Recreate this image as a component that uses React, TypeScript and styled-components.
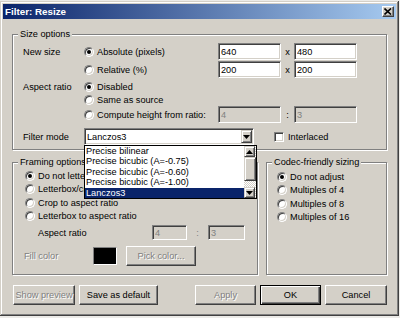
import React from 'react'
import styled, { createGlobalStyle, css } from 'styled-components'

const face = '#d4d0c8'
const shadow = '#808080'
const dark = '#404040'

const GlobalStyle = createGlobalStyle`
  html, body { margin: 0; padding: 0; }
  body {
    background: #ecebe8;
    font-family: "Liberation Sans", Arial, sans-serif;
    font-size: 9.2px;
    color: #000;
    overflow: hidden;
  }
`

const Window = styled.div`
  width: 399px;
  height: 315px;
  margin-top: 1px;
  box-sizing: border-box;
  padding: 3px;
  background: ${face};
  box-shadow: inset -1px -1px ${dark}, inset 1px 1px ${face}, inset -2px -2px ${shadow}, inset 2px 2px #fff;
  display: flex;
  flex-direction: column;
`

const TitleBar = styled.div`
  height: 15px;
  display: flex;
  align-items: center;
  justify-content: space-between;
  padding: 0 2px;
  background: linear-gradient(to right, #0a246a, #a6caf0);
  color: #fff;
  font-weight: bold;
  font-size: 9.8px;
`

const CloseButton = styled.span`
  width: 12px;
  height: 11px;
  box-sizing: border-box;
  background: ${face};
  border: 1px solid;
  border-color: #fff ${dark} ${dark} #fff;
  box-shadow: inset -1px -1px ${shadow};
  display: flex;
  align-items: center;
  justify-content: center;
`

const Content = styled.div`
  padding: 9px 9px 0 9px;
  display: flex;
  flex-direction: column;
`

const Group = styled.fieldset<{ $width?: number }>`
  margin: 0;
  padding: 0;
  min-width: 0;
  box-sizing: border-box;
  border: 1px solid ${shadow};
  box-shadow: inset 1px 1px #fff, 1px 1px #fff;
  ${p => p.$width ? `width: ${p.$width}px;` : 'flex: 1;'}
`

const Legend = styled.legend`
  margin-left: 5px;
  padding: 0 2px;
  height: 12px;
  line-height: 12px;
  background: ${face};
`

const GroupBody = styled.div<{ $pad: string }>`
  padding: ${p => p.$pad};
`

const SizeGrid = styled.div`
  display: grid;
  grid-template-columns: 61px 134px 63px 13px 63px;
  grid-template-rows: 18px 18px 15px 12px 17px 22px;
`

const Cell = styled.div<{ $bottom?: boolean }>`
  display: flex;
  align-items: center;
  white-space: nowrap;
  ${p => p.$bottom && css`
    align-self: end;
    height: 17px;
  `}
`

const Sep = styled.div`
  display: flex;
  align-items: center;
  justify-content: center;
  height: 17px;
`

const Option = styled.label<{ $span?: boolean }>`
  display: flex;
  align-items: center;
  gap: 3px;
  white-space: nowrap;
  ${p => p.$span && 'grid-column: 2 / 6;'}
`

const Dot = styled.span<{ $checked?: boolean }>`
  width: 10px;
  height: 10px;
  flex: none;
  box-sizing: border-box;
  border-radius: 50%;
  background: #fff;
  border: 1px solid;
  border-color: ${shadow} #fff #fff ${shadow};
  box-shadow: inset 1px 1px ${dark}, inset -1px -1px ${face};
  &::after {
    content: '';
    display: ${p => (p.$checked ? 'block' : 'none')};
    width: 4px;
    height: 4px;
    margin: 2px;
    border-radius: 50%;
    background: #000;
  }
`

const Field = styled.input<{ $w?: number; $h?: number }>`
  width: ${p => p.$w ?? 63}px;
  height: ${p => p.$h ?? 17}px;
  box-sizing: border-box;
  margin: 0;
  padding: 0 2px;
  font: inherit;
  color: #000;
  background: #fff;
  border: 1px solid;
  border-color: ${shadow} #fff #fff ${shadow};
  box-shadow: inset 1px 1px ${dark}, inset -1px -1px ${face};
  outline: none;
  &:disabled {
    background: ${face};
    color: ${shadow};
  }
`

const FilterRow = styled.div`
  grid-column: 2 / 6;
  align-self: end;
  height: 17px;
  display: flex;
  align-items: center;
`

const Combo = styled.div`
  position: relative;
  width: 170px;
  height: 17px;
  box-sizing: border-box;
  padding: 1px;
  background: #fff;
  border: 1px solid;
  border-color: ${shadow} #fff #fff ${shadow};
  box-shadow: inset 1px 1px ${dark}, inset -1px -1px ${face};
  display: flex;
  align-items: stretch;
`

const ComboText = styled.span`
  flex: 1;
  padding-left: 1px;
  display: flex;
  align-items: center;
`

const ArrowButton = styled.span<{ $h?: number }>`
  width: 11px;
  ${p => p.$h && `height: ${p.$h}px;`}
  flex: none;
  box-sizing: border-box;
  background: ${face};
  border: 1px solid;
  border-color: ${face} ${dark} ${dark} ${face};
  box-shadow: inset 1px 1px #fff, inset -1px -1px ${shadow};
  display: flex;
  align-items: center;
  justify-content: center;
`

const DropList = styled.div`
  position: absolute;
  top: calc(100% + 1px);
  left: -1px;
  width: 173px;
  height: 54px;
  box-sizing: border-box;
  border: 1px solid #000;
  background: #fff;
  display: flex;
  z-index: 5;
`

const Items = styled.div`
  flex: 1;
`

const Item = styled.div<{ $selected?: boolean }>`
  height: 10.4px;
  line-height: 10.4px;
  padding-left: 1px;
  white-space: nowrap;
  ${p => p.$selected && css`
    background: #0a246a;
    color: #fff;
  `}
`

const ScrollBar = styled.div`
  width: 12px;
  display: flex;
  flex-direction: column;
  background: repeating-conic-gradient(#fff 0 25%, ${face} 0 50%) 0 0 / 2px 2px;
`

const Thumb = styled.span`
  height: 24px;
  box-sizing: border-box;
  background: ${face};
  border: 1px solid;
  border-color: ${face} ${dark} ${dark} ${face};
  box-shadow: inset 1px 1px #fff, inset -1px -1px ${shadow};
`

const Track = styled.span`
  flex: 1;
`

const CheckBox = styled.span`
  width: 10px;
  height: 10px;
  flex: none;
  box-sizing: border-box;
  background: #fff;
  border: 1px solid;
  border-color: ${shadow} #fff #fff ${shadow};
  box-shadow: inset 1px 1px ${dark}, inset -1px -1px ${face};
`

const CheckLabel = styled.label`
  margin-left: 20px;
  display: flex;
  align-items: center;
  gap: 4px;
`

const LowerRow = styled.div`
  margin-top: 6px;
  display: flex;
  gap: 8px;
`

const OptionRow = styled.div`
  height: 13.5px;
  display: flex;
  align-items: center;
`

const FlexRow = styled.div<{ $h: number; $top: number }>`
  height: ${p => p.$h}px;
  margin-top: ${p => p.$top}px;
  display: flex;
  align-items: center;
`

const SubLabel = styled.span<{ $w: number; $indent: number; $disabled?: boolean }>`
  width: ${p => p.$w}px;
  margin-left: ${p => p.$indent}px;
  flex: none;
  white-space: nowrap;
  ${p => p.$disabled && css`
    color: ${shadow};
    text-shadow: 1px 1px #fff;
  `}
`

const RatioSep = styled.span`
  width: 21px;
  text-align: center;
  color: ${shadow};
`

const Swatch = styled.span`
  width: 24px;
  height: 18px;
  box-sizing: border-box;
  background: #000;
  border: 1px solid;
  border-color: ${shadow} #fff #fff ${shadow};
`

const Button = styled.button<{ $w: number; $default?: boolean; $left?: number }>`
  width: ${p => p.$w}px;
  height: 20px;
  box-sizing: border-box;
  margin: 0;
  margin-left: ${p => p.$left ?? 0}px;
  padding: 0;
  font: inherit;
  color: #000;
  background: ${face};
  border: 1px solid;
  border-color: #fff ${dark} ${dark} #fff;
  box-shadow: inset -1px -1px ${shadow};
  &:disabled {
    color: ${shadow};
    text-shadow: 1px 1px #fff;
  }
  ${p => p.$default && css`
    border-color: #000;
    box-shadow: inset 1px 1px #fff, inset -1px -1px ${dark}, inset -2px -2px ${shadow};
  `}
`

const ButtonBar = styled.div`
  margin-top: 10px;
  padding-left: 1px;
  display: flex;
  gap: 4px;
`

const Spacer = styled.span`
  flex: 1;
`

const Arrow: React.FC<{ up?: boolean }> = ({ up }) => (
  <svg width="7" height="4" viewBox="0 0 7 4">
    <path d={up ? 'M3.5 0 L7 4 L0 4 Z' : 'M0 0 L7 0 L3.5 4 Z'} fill="#000" />
  </svg>
)

const Radio: React.FC<{ checked?: boolean; span?: boolean; children: React.ReactNode }> = ({ checked, span, children }) => (
  <Option $span={span}>
    <Dot $checked={checked} />
    {children}
  </Option>
)

const filters = [
  'Precise bilinear',
  'Precise bicubic (A=-0.75)',
  'Precise bicubic (A=-0.60)',
  'Precise bicubic (A=-1.00)',
  'Lanczos3',
]

const App: React.FC = () => {
  return (
    <>
      <GlobalStyle />
      <Window>
        <TitleBar>
          <span>Filter: Resize</span>
          <CloseButton>
            <svg width="8" height="7" viewBox="0 0 8 7">
              <path d="M0.5 0.5 L7 6.5 M7 0.5 L0.5 6.5" stroke="#000" strokeWidth="1.6" />
            </svg>
          </CloseButton>
        </TitleBar>
        <Content>
          <Group>
            <Legend>Size options</Legend>
            <GroupBody $pad="3px 9px 4px 10px">
              <SizeGrid>
                <Cell>New size</Cell>
                <Radio checked>Absolute (pixels)</Radio>
                <Field readOnly value="640" />
                <Sep>x</Sep>
                <Field readOnly value="480" />

                <Cell />
                <Radio>Relative (%)</Radio>
                <Field readOnly value="200" />
                <Sep>x</Sep>
                <Field readOnly value="200" />

                <Cell>Aspect ratio</Cell>
                <Radio checked span>Disabled</Radio>

                <Cell />
                <Radio span>Same as source</Radio>

                <Cell />
                <Radio>Compute height from ratio:</Radio>
                <Field disabled value="4" />
                <Sep>:</Sep>
                <Field disabled value="3" />

                <Cell $bottom>Filter mode</Cell>
                <FilterRow>
                  <Combo>
                    <ComboText>Lanczos3</ComboText>
                    <ArrowButton>
                      <Arrow />
                    </ArrowButton>
                    <DropList>
                      <Items>
                        {filters.map(f => (
                          <Item key={f} $selected={f === 'Lanczos3'}>{f}</Item>
                        ))}
                      </Items>
                      <ScrollBar>
                        <ArrowButton $h={11}>
                          <Arrow up />
                        </ArrowButton>
                        <Thumb />
                        <Track />
                        <ArrowButton $h={11}>
                          <Arrow />
                        </ArrowButton>
                      </ScrollBar>
                    </DropList>
                  </Combo>
                  <CheckLabel>
                    <CheckBox />
                    Interlaced
                  </CheckLabel>
                </FilterRow>
              </SizeGrid>
            </GroupBody>
          </Group>

          <LowerRow>
            <Group $width={246}>
              <Legend>Framing options</Legend>
              <GroupBody $pad="1px 8px 8px 12px">
                <OptionRow><Radio checked>Do not letterbox or crop</Radio></OptionRow>
                <OptionRow><Radio>Letterbox/crop to size</Radio></OptionRow>
                <OptionRow><Radio>Crop to aspect ratio</Radio></OptionRow>
                <OptionRow><Radio>Letterbox to aspect ratio</Radio></OptionRow>
                <FlexRow $h={15} $top={2}>
                  <SubLabel $w={114} $indent={13}>Aspect ratio</SubLabel>
                  <Field disabled value="4" $w={35} $h={15} />
                  <RatioSep>:</RatioSep>
                  <Field disabled value="3" $w={37} $h={15} />
                </FlexRow>
                <FlexRow $h={20} $top={6}>
                  <SubLabel $w={69} $indent={-1} $disabled>Fill color</SubLabel>
                  <Swatch />
                  <Button disabled $w={70} $left={9}>Pick color...</Button>
                </FlexRow>
              </GroupBody>
            </Group>
            <Group>
              <Legend>Codec-friendly sizing</Legend>
              <GroupBody $pad="2px 8px 8px 10px">
                <OptionRow><Radio checked>Do not adjust</Radio></OptionRow>
                <OptionRow><Radio>Multiples of 4</Radio></OptionRow>
                <OptionRow><Radio>Multiples of 8</Radio></OptionRow>
                <OptionRow><Radio>Multiples of 16</Radio></OptionRow>
              </GroupBody>
            </Group>
          </LowerRow>

          <ButtonBar>
            <Button disabled $w={62}>Show preview</Button>
            <Button $w={79}>Save as default</Button>
            <Spacer />
            <Button disabled $w={61}>Apply</Button>
            <Button $default $w={61}>OK</Button>
            <Button $w={62}>Cancel</Button>
          </ButtonBar>
        </Content>
      </Window>
    </>
  )
}

export default App
